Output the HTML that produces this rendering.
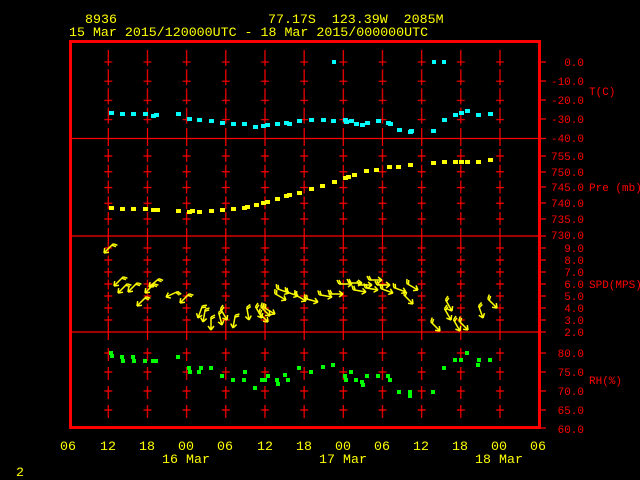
<!DOCTYPE html>
<html><head><meta charset="utf-8"><style>
html,body{margin:0;padding:0;background:#000;width:640px;height:480px;overflow:hidden}
svg{display:block}
.y{fill:#ffff00;font-family:"Liberation Mono",monospace;font-size:13.3px}
.r{fill:#ff0000;font-family:"Liberation Mono",monospace;font-size:11px}
</style></head><body>
<svg width="640" height="480" viewBox="0 0 640 480" xmlns="http://www.w3.org/2000/svg">
<defs>
<pattern id="pT" patternUnits="userSpaceOnUse" x="88.7" y="50" width="39.17" height="19.2"><path d="M19.6 0V16M15.6 12H23.6" stroke="#f00" stroke-width="1.2" fill="none"/></pattern>
<pattern id="pP" patternUnits="userSpaceOnUse" x="88.7" y="149" width="39.17" height="15.75"><path d="M19.6 0V13M15.6 7H23.6" stroke="#f00" stroke-width="1.2" fill="none"/></pattern>
<pattern id="pS" patternUnits="userSpaceOnUse" x="88.7" y="243" width="39.17" height="12"><path d="M19.6 0.5V10.5M15.6 5H23.6" stroke="#f00" stroke-width="1.2" fill="none"/></pattern>
<pattern id="pR" patternUnits="userSpaceOnUse" x="88.7" y="348" width="39.17" height="19"><path d="M19.6 0V13M15.6 5H23.6" stroke="#f00" stroke-width="1.2" fill="none"/></pattern>
<path id="ar" d="M-13 0H0M0 0L-4-3M0 0L-4 3M-13 0L-15-4M-11 0L-13-4" stroke="#ffff00" stroke-width="1.5" fill="none"/>
</defs>
<rect x="88" y="50" width="430" height="77" fill="url(#pT)"/>
<rect x="88" y="149" width="430" height="78.7" fill="url(#pP)"/>
<rect x="88" y="243" width="430" height="84" fill="url(#pS)"/>
<rect x="88" y="348" width="430" height="76" fill="url(#pR)"/>
<g stroke="#f00" stroke-width="1.2">
<path d="M108.3 128V146M147.5 128V146M186.7 128V146M225.8 128V146M265 128V146M304.2 128V146M343.3 128V146M382.5 128V146M421.7 128V146M460.8 128V146M500 128V146"/>
<path d="M108.3 228V244M147.5 228V244M186.7 228V244M225.8 228V244M265 228V244M304.2 228V244M343.3 228V244M382.5 228V244M421.7 228V244M460.8 228V244M500 228V244"/>
<path d="M108.3 325V340M147.5 325V340M186.7 325V340M225.8 325V340M265 325V340M304.2 325V340M343.3 325V340M382.5 325V340M421.7 325V340M460.8 325V340M500 325V340"/>
<path d="M70 138.5H546M70 236H546M70 332H546"/>
<path d="M538 62H546M538 81H546M538 100H546M538 119H546M538 156H546M538 172H546M538 187H546M538 203H546M538 219H546M538 248H546M538 260H546M538 272H546M538 284H546M538 296H546M538 308H546M538 320H546M538 353H546M538 372H546M538 391H546M538 410H546M538 428H546"/>
</g>
<rect x="70.5" y="41.5" width="469" height="386" fill="none" stroke="#f00" stroke-width="3"/>
<g fill="#00ffff">
<rect x="109" y="111" width="5" height="4"/><rect x="120" y="112" width="5" height="4"/><rect x="131" y="112" width="5" height="4"/><rect x="143" y="112" width="5" height="4"/><rect x="151" y="114" width="5" height="4"/><rect x="154" y="113" width="5" height="4"/><rect x="176" y="112" width="5" height="4"/><rect x="187" y="117" width="5" height="4"/><rect x="197" y="118" width="5" height="4"/><rect x="209" y="119" width="5" height="4"/><rect x="220" y="121" width="5" height="4"/><rect x="231" y="122" width="5" height="4"/><rect x="242" y="122" width="5" height="4"/><rect x="253" y="125" width="5" height="4"/><rect x="261" y="124" width="5" height="4"/><rect x="265" y="123" width="5" height="4"/><rect x="275" y="122" width="5" height="4"/><rect x="284" y="121" width="5" height="4"/><rect x="287" y="122" width="5" height="4"/><rect x="297" y="119" width="5" height="4"/><rect x="309" y="118" width="5" height="4"/><rect x="321" y="118" width="5" height="4"/><rect x="331" y="119" width="5" height="4"/><rect x="343" y="118" width="5" height="4"/><rect x="344" y="120" width="5" height="4"/><rect x="349" y="119" width="5" height="4"/><rect x="354" y="122" width="5" height="4"/><rect x="360" y="123" width="5" height="4"/><rect x="365" y="121" width="5" height="4"/><rect x="376" y="119" width="5" height="4"/><rect x="386" y="121" width="5" height="4"/><rect x="388" y="122" width="5" height="4"/><rect x="397" y="128" width="5" height="4"/><rect x="408" y="130" width="5" height="4"/><rect x="409" y="129" width="5" height="4"/><rect x="431" y="129" width="5" height="4"/><rect x="332" y="60" width="4" height="4"/><rect x="432" y="60" width="4" height="4"/><rect x="442" y="60" width="4" height="4"/><rect x="442" y="118" width="5" height="4"/><rect x="453" y="113" width="5" height="4"/><rect x="459" y="111" width="5" height="4"/><rect x="465" y="109" width="5" height="4"/><rect x="476" y="113" width="5" height="4"/><rect x="488" y="112" width="5" height="4"/>
</g>
<g fill="#ffff00">
<rect x="109" y="206" width="5" height="4"/><rect x="120" y="207" width="5" height="4"/><rect x="131" y="207" width="5" height="4"/><rect x="143" y="207" width="5" height="4"/><rect x="151" y="208" width="5" height="4"/><rect x="155" y="208" width="5" height="4"/><rect x="176" y="209" width="5" height="4"/><rect x="187" y="210" width="5" height="4"/><rect x="190" y="209" width="5" height="4"/><rect x="197" y="210" width="5" height="4"/><rect x="209" y="209" width="5" height="4"/><rect x="220" y="208" width="5" height="4"/><rect x="231" y="207" width="5" height="4"/><rect x="242" y="206" width="5" height="4"/><rect x="245" y="205" width="5" height="4"/><rect x="254" y="203" width="5" height="4"/><rect x="261" y="201" width="5" height="4"/><rect x="265" y="200" width="5" height="4"/><rect x="275" y="197" width="5" height="4"/><rect x="284" y="194" width="5" height="4"/><rect x="287" y="193" width="5" height="4"/><rect x="297" y="191" width="5" height="4"/><rect x="309" y="187" width="5" height="4"/><rect x="320" y="184" width="5" height="4"/><rect x="332" y="180" width="5" height="4"/><rect x="343" y="176" width="5" height="4"/><rect x="346" y="175" width="5" height="4"/><rect x="352" y="173" width="5" height="4"/><rect x="364" y="169" width="5" height="4"/><rect x="374" y="168" width="5" height="4"/><rect x="387" y="165" width="5" height="4"/><rect x="396" y="165" width="5" height="4"/><rect x="408" y="163" width="5" height="4"/><rect x="431" y="161" width="5" height="4"/><rect x="442" y="160" width="5" height="4"/><rect x="453" y="160" width="5" height="4"/><rect x="459" y="160" width="5" height="4"/><rect x="465" y="160" width="5" height="4"/><rect x="476" y="160" width="5" height="4"/><rect x="488" y="158" width="5" height="4"/>
</g>
<g fill="#00ff00">
<rect x="109" y="351" width="4" height="4"/><rect x="110" y="354" width="4" height="4"/><rect x="120" y="355" width="4" height="4"/><rect x="121" y="359" width="4" height="4"/><rect x="131" y="355" width="4" height="4"/><rect x="132" y="359" width="4" height="4"/><rect x="143" y="359" width="4" height="4"/><rect x="151" y="359" width="4" height="4"/><rect x="154" y="359" width="4" height="4"/><rect x="176" y="355" width="4" height="4"/><rect x="187" y="366" width="4" height="4"/><rect x="188" y="370" width="4" height="4"/><rect x="197" y="370" width="4" height="4"/><rect x="199" y="366" width="4" height="4"/><rect x="209" y="366" width="4" height="4"/><rect x="220" y="374" width="4" height="4"/><rect x="231" y="378" width="4" height="4"/><rect x="242" y="378" width="4" height="4"/><rect x="243" y="370" width="4" height="4"/><rect x="253" y="386" width="4" height="4"/><rect x="260" y="378" width="4" height="4"/><rect x="263" y="378" width="4" height="4"/><rect x="266" y="374" width="4" height="4"/><rect x="275" y="378" width="4" height="4"/><rect x="276" y="382" width="4" height="4"/><rect x="283" y="373" width="4" height="4"/><rect x="286" y="378" width="4" height="4"/><rect x="297" y="366" width="4" height="4"/><rect x="309" y="370" width="4" height="4"/><rect x="321" y="365" width="4" height="4"/><rect x="331" y="363" width="4" height="4"/><rect x="343" y="374" width="4" height="4"/><rect x="344" y="378" width="4" height="4"/><rect x="349" y="370" width="4" height="4"/><rect x="354" y="378" width="4" height="4"/><rect x="360" y="380" width="4" height="4"/><rect x="361" y="383" width="4" height="4"/><rect x="365" y="374" width="4" height="4"/><rect x="376" y="374" width="4" height="4"/><rect x="386" y="374" width="4" height="4"/><rect x="388" y="378" width="4" height="4"/><rect x="397" y="390" width="4" height="4"/><rect x="408" y="390" width="4" height="4"/><rect x="408" y="394" width="4" height="4"/><rect x="431" y="390" width="4" height="4"/><rect x="442" y="366" width="4" height="4"/><rect x="453" y="358" width="4" height="4"/><rect x="459" y="358" width="4" height="4"/><rect x="465" y="351" width="4" height="4"/><rect x="476" y="363" width="4" height="4"/><rect x="477" y="358" width="4" height="4"/><rect x="488" y="358" width="4" height="4"/>
</g>
<g>
<use href="#ar" transform="translate(104,253) rotate(135)"/>
<use href="#ar" transform="translate(114,286) rotate(135)"/>
<use href="#ar" transform="translate(118,293) rotate(135)"/>
<use href="#ar" transform="translate(128,292) rotate(135)"/>
<use href="#ar" transform="translate(145,293) rotate(135)"/>
<use href="#ar" transform="translate(149,287) rotate(140)"/>
<use href="#ar" transform="translate(137,306) rotate(135)"/>
<use href="#ar" transform="translate(166,297) rotate(155)"/>
<use href="#ar" transform="translate(180,303) rotate(135)"/>
<use href="#ar" transform="translate(198,318) rotate(110)"/>
<use href="#ar" transform="translate(203,322) rotate(100)"/>
<use href="#ar" transform="translate(211,330) rotate(90)"/>
<use href="#ar" transform="translate(222,325) rotate(75)"/>
<use href="#ar" transform="translate(233,328) rotate(100)"/>
<use href="#ar" transform="translate(227,320) rotate(60)"/>
<use href="#ar" transform="translate(249,320) rotate(80)"/>
<use href="#ar" transform="translate(262,318) rotate(60)"/>
<use href="#ar" transform="translate(270,316) rotate(45)"/>
<use href="#ar" transform="translate(268,322) rotate(45)"/>
<use href="#ar" transform="translate(275,314) rotate(30)"/>
<use href="#ar" transform="translate(286,300) rotate(30)"/>
<use href="#ar" transform="translate(289,293) rotate(20)"/>
<use href="#ar" transform="translate(298,296) rotate(20)"/>
<use href="#ar" transform="translate(306,301) rotate(30)"/>
<use href="#ar" transform="translate(318,302) rotate(15)"/>
<use href="#ar" transform="translate(332,297) rotate(10)"/>
<use href="#ar" transform="translate(343,294) rotate(0)"/>
<use href="#ar" transform="translate(352,284) rotate(0)"/>
<use href="#ar" transform="translate(362,283) rotate(0)"/>
<use href="#ar" transform="translate(372,285) rotate(0)"/>
<use href="#ar" transform="translate(382,280) rotate(0)"/>
<use href="#ar" transform="translate(390,285) rotate(0)"/>
<use href="#ar" transform="translate(366,292) rotate(10)"/>
<use href="#ar" transform="translate(378,290) rotate(10)"/>
<use href="#ar" transform="translate(393,293) rotate(20)"/>
<use href="#ar" transform="translate(406,292) rotate(20)"/>
<use href="#ar" transform="translate(418,290) rotate(30)"/>
<use href="#ar" transform="translate(413,304) rotate(45)"/>
<use href="#ar" transform="translate(440,331) rotate(45)"/>
<use href="#ar" transform="translate(452,311) rotate(60)"/>
<use href="#ar" transform="translate(451,320) rotate(60)"/>
<use href="#ar" transform="translate(460,331) rotate(60)"/>
<use href="#ar" transform="translate(468,330) rotate(45)"/>
<use href="#ar" transform="translate(483,318) rotate(70)"/>
<use href="#ar" transform="translate(497,308) rotate(45)"/>
</g>
<g class="y">
<text x="85" y="23">8936</text>
<text x="268" y="23" xml:space="preserve">77.17S  123.39W  2085M</text>
<text x="69" y="36">15 Mar 2015/120000UTC - 18 Mar 2015/000000UTC</text>
<g text-anchor="middle">
<text x="68" y="450">06</text><text x="108" y="450">12</text><text x="147" y="450">18</text><text x="186" y="450">00</text><text x="225" y="450">06</text><text x="265" y="450">12</text><text x="304" y="450">18</text><text x="343" y="450">00</text><text x="382" y="450">06</text><text x="421" y="450">12</text><text x="460" y="450">18</text><text x="499" y="450">00</text><text x="538" y="450">06</text>
<text x="186" y="463">16 Mar</text><text x="343" y="463">17 Mar</text><text x="499" y="463">18 Mar</text>
</g>
<text x="16" y="476">2</text>
</g>
<g class="r" text-anchor="end">
<text x="584" y="66">0.0</text><text x="584" y="85">-10.0</text><text x="584" y="104">-20.0</text><text x="584" y="123">-30.0</text><text x="584" y="142">-40.0</text>
<text x="584" y="160">755.0</text><text x="584" y="176">750.0</text><text x="584" y="191">745.0</text><text x="584" y="207">740.0</text><text x="584" y="223">735.0</text><text x="584" y="239">730.0</text>
<text x="584" y="252">9.0</text><text x="584" y="264">8.0</text><text x="584" y="276">7.0</text><text x="584" y="288">6.0</text><text x="584" y="300">5.0</text><text x="584" y="312">4.0</text><text x="584" y="324">3.0</text><text x="584" y="336">2.0</text>
<text x="584" y="357">80.0</text><text x="584" y="376">75.0</text><text x="584" y="395">70.0</text><text x="584" y="414">65.0</text><text x="584" y="433">60.0</text>
</g>
<g class="r">
<text x="589" y="95">T(C)</text><text x="589" y="191">Pre (mb)</text><text x="589" y="288">SPD(MPS)</text><text x="589" y="384">RH(%)</text>
</g>
</svg>
</body></html>
